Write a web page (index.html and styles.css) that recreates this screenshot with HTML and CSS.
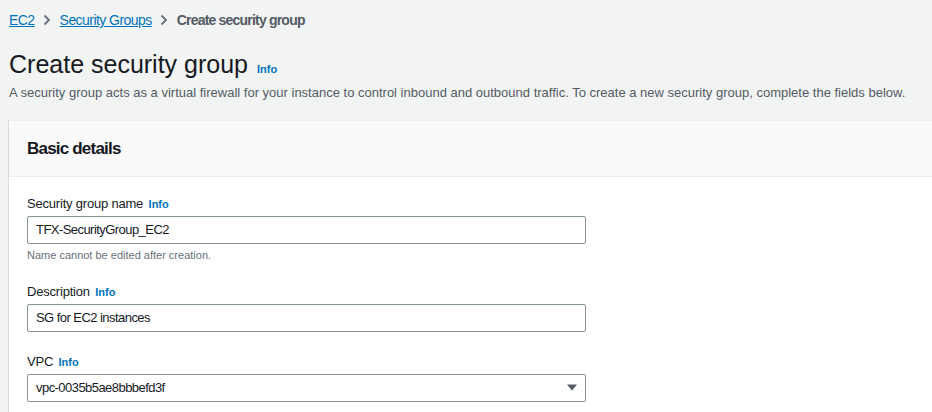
FILE: index.html
```html
<!DOCTYPE html>
<html>
<head>
<meta charset="utf-8">
<link rel="stylesheet" href="styles.css">
</head>
<body>
<div class="page">
  <nav class="crumbs">
    <a class="crumb-link" href="#">EC2</a>
    <svg class="chev" width="10" height="12" viewBox="0 0 10 12"><path d="M2.5 1.5 L7 6 L2.5 10.5" fill="none" stroke="#687078" stroke-width="1.8"/></svg>
    <a class="crumb-link" href="#">Security Groups</a>
    <svg class="chev" width="10" height="12" viewBox="0 0 10 12"><path d="M2.5 1.5 L7 6 L2.5 10.5" fill="none" stroke="#687078" stroke-width="1.8"/></svg>
    <span class="crumb-current">Create security group</span>
  </nav>
  <div class="title-row">
    <h1 class="title">Create security group</h1>
    <a class="info" href="#">Info</a>
  </div>
  <p class="lead">A security group acts as a virtual firewall for your instance to control inbound and outbound traffic. To create a new security group, complete the fields below.</p>
  <section class="card">
    <header class="card-head">
      <h2 class="card-title">Basic details</h2>
    </header>
    <div class="card-body">
      <div class="field">
        <label class="label">Security group name <a class="info" href="#">Info</a></label>
        <div class="input">TFX-SecurityGroup_EC2</div>
        <div class="hint">Name cannot be edited after creation.</div>
      </div>
      <div class="field field-desc">
        <label class="label">Description <a class="info" href="#">Info</a></label>
        <div class="input">SG for EC2 instances</div>
      </div>
      <div class="field field-last">
        <label class="label">VPC <a class="info" href="#">Info</a></label>
        <div class="input select">
          <span>vpc-0035b5ae8bbbefd3f</span>
          <svg class="caret" width="10" height="7" viewBox="0 0 10 7"><path d="M0 0.5 L10 0.5 L5 6.5 Z" fill="#545b64"/></svg>
        </div>
      </div>
    </div>
  </section>
</div>
</body>
</html>
```
FILE: styles.css
```css
html, body {
  margin: 0;
  padding: 0;
  background: #f2f3f3;
  font-family: "Liberation Sans", Arial, sans-serif;
  color: #16191f;
  overflow: hidden;
}
.page {
  padding: 9px 0 0 9px;
}
.crumbs {
  display: flex;
  align-items: center;
  font-size: 14px;
  letter-spacing: -0.55px;
  height: 22px;
}
.crumb-link {
  color: #0073bb;
  text-decoration: underline;
}
.chev {
  margin: 0 8px 0 7px;
}
.crumb-current {
  color: #545b64;
  font-weight: bold;
  letter-spacing: -0.8px;
}
.title-row {
  display: flex;
  align-items: baseline;
  margin-top: 17px;
}
.title {
  font-size: 25px;
  font-weight: normal;
  margin: 0;
  line-height: 32px;
}
.info {
  color: #0073bb;
  font-size: 11px;
  font-weight: bold;
  letter-spacing: 0;
  text-decoration: none;
  margin-left: 9px;
}
.label .info { margin-left: 2px; }
.lead {
  margin: 3px 0 0;
  font-size: 13px;
  color: #545b64;
  line-height: 20px;
}
.card {
  margin-top: 17px;
  background: #fff;
  border-left: 1px solid #d5dbdb;
  border-top: 1px solid #eaeded;
  margin-left: -1px;
}
.card-head {
  background: #fafafa;
  border-bottom: 1px solid #eaeded;
  height: 55px;
  display: flex;
  align-items: center;
  padding-left: 18px;
}
.card-title {
  margin: 0;
  font-size: 17px;
  font-weight: bold;
  letter-spacing: -0.8px;
}
.card-body {
  padding: 18px 0 11px 18px;
}
.field {
  margin-bottom: 21.5px;
}
.field-desc {
  margin-bottom: 21px;
}
.field-last {
  margin-bottom: 0;
}
.label {
  display: block;
  font-size: 13px;
  letter-spacing: -0.2px;
  line-height: 18px;
  margin-bottom: 3px;
}
.input {
  box-sizing: border-box;
  width: 559px;
  height: 28px;
  border: 1px solid #879596;
  border-radius: 2px;
  background: #fff;
  font-size: 13px;
  letter-spacing: -0.55px;
  line-height: 26px;
  padding-left: 8px;
  color: #16191f;
}
.hint {
  font-size: 11px;
  color: #687078;
  margin-top: 5px;
  margin-bottom: 0.5px;
}
.select {
  display: flex;
  align-items: center;
  justify-content: space-between;
  padding-right: 8px;
}
```
